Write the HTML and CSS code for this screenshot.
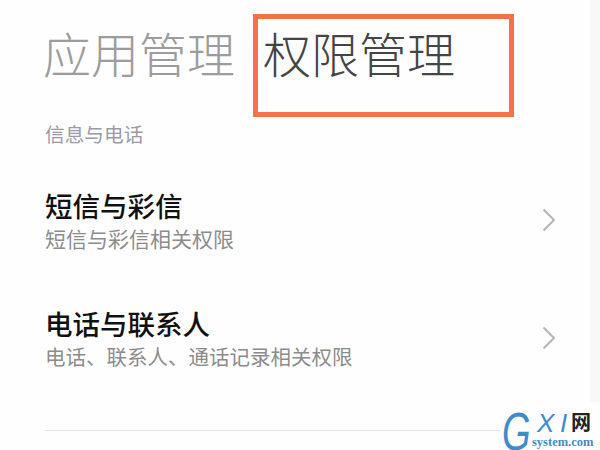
FILE: index.html
```html
<!DOCTYPE html>
<html lang="zh-CN">
<head>
<meta charset="utf-8">
<title>权限管理</title>
<link rel="stylesheet" href="styles.css">
</head>
<body>
<div class="screen">
  <header class="tabs">
    <span class="tab tab-idle">应用管理</span>
    <span class="tab-box"><span class="tab tab-active">权限管理</span></span>
  </header>
  <div class="section">信息与电话</div>
  <div class="row row-first">
    <div class="row-text">
      <div class="row-title">短信与彩信</div>
      <div class="row-sub row-sub-wide">短信与彩信相关权限</div>
    </div>
    <svg class="chev" viewBox="0 0 14 24" width="14" height="24"><path d="M1.5 1.5 L12 12 L1.5 22.5" fill="none" stroke="#b4b4b4" stroke-width="2"/></svg>
  </div>
  <div class="row row-second">
    <div class="row-text">
      <div class="row-title">电话与联系人</div>
      <div class="row-sub">电话、联系人、通话记录相关权限</div>
    </div>
    <svg class="chev" viewBox="0 0 14 24" width="14" height="24"><path d="M1.5 1.5 L12 12 L1.5 22.5" fill="none" stroke="#b4b4b4" stroke-width="2"/></svg>
  </div>
  <div class="divider"></div>
  <div class="edge"></div>
  <div class="logo">
    <span class="logo-g">G</span>
    <span class="logo-x">X</span>
    <span class="logo-i">I</span>
    <span class="logo-net">网</span>
    <span class="logo-site">system.com</span>
  </div>
</div>
</body>
</html>
```
FILE: styles.css
```css
* { box-sizing: border-box; }
html, body { margin: 0; padding: 0; background: #fff; }
.screen {
  position: relative;
  width: 600px;
  height: 450px;
  overflow: hidden;
  background: #fefefe;
  font-family: "Noto Sans CJK SC", "Noto Sans", sans-serif;
}
.tabs {
  display: flex;
  align-items: flex-start;
  padding: 14px 0 0 43px;
  height: 103px;
}
.tab { font-size: 48px; line-height: 60px; font-weight: 300; display: block; }
.tab-idle { color: #9c9c9c; margin-top: 8px; width: 210px; white-space: nowrap; }
.tab-box {
  display: block;
  width: 261px;
  height: 103px;
  border: 5px solid #f4714a;
  padding: 3px 0 0 5px;
}
.tab-active { color: #454545; white-space: nowrap; }
.section {
  margin: 17px 0 0 45px;
  font-size: 19.7px;
  line-height: 28px;
  color: #9a9aa8;
}
.row {
  display: flex;
  align-items: center;
  justify-content: space-between;
  padding: 0 44px 0 45px;
}
.row-first { margin-top: 39px; }
.row-second { margin-top: 52px; }
.row-title {
  font-size: 27.5px;
  line-height: 36px;
  font-weight: 500;
  color: #111;
}
.row-sub {
  font-size: 20.5px;
  line-height: 30px;
  color: #8c8c8c;
}
.row-sub-wide { font-size: 21px; }
.chev { display: block; }
.divider {
  margin: 59px 0 0 45px;
  width: 510px;
  height: 1px;
  background: #e2e2e2;
}
.edge {
  position: absolute;
  top: 0;
  right: 0;
  width: 10px;
  height: 402px;
  background: #f8f8f8;
}
.logo {
  position: absolute;
  left: 500px;
  top: 402px;
  width: 100px;
  height: 48px;
  background: #fefefe;
}
.logo-g {
  position: absolute;
  left: 2px;
  top: 11px;
  font: italic 400 54px/36px "Liberation Sans", sans-serif;
  color: #3f8ccb;
  transform: scaleX(0.68);
  transform-origin: left center;
}
.logo-x {
  position: absolute;
  left: 37px;
  top: 10px;
  font: italic 400 26px/22px "Liberation Sans", sans-serif;
  color: #3f8ccb;
}
.logo-i {
  position: absolute;
  left: 60px;
  top: 10px;
  font: italic 400 26px/22px "Liberation Sans", sans-serif;
  color: #3f8ccb;
}
.logo-net {
  position: absolute;
  left: 71px;
  top: 9px;
  font-size: 20px;
  line-height: 22px;
  font-weight: 700;
  color: #222;
}
.logo-site {
  position: absolute;
  left: 32px;
  top: 34px;
  font: 700 12.5px/13px "Liberation Serif", serif;
  color: #3f8ccb;
}
```
